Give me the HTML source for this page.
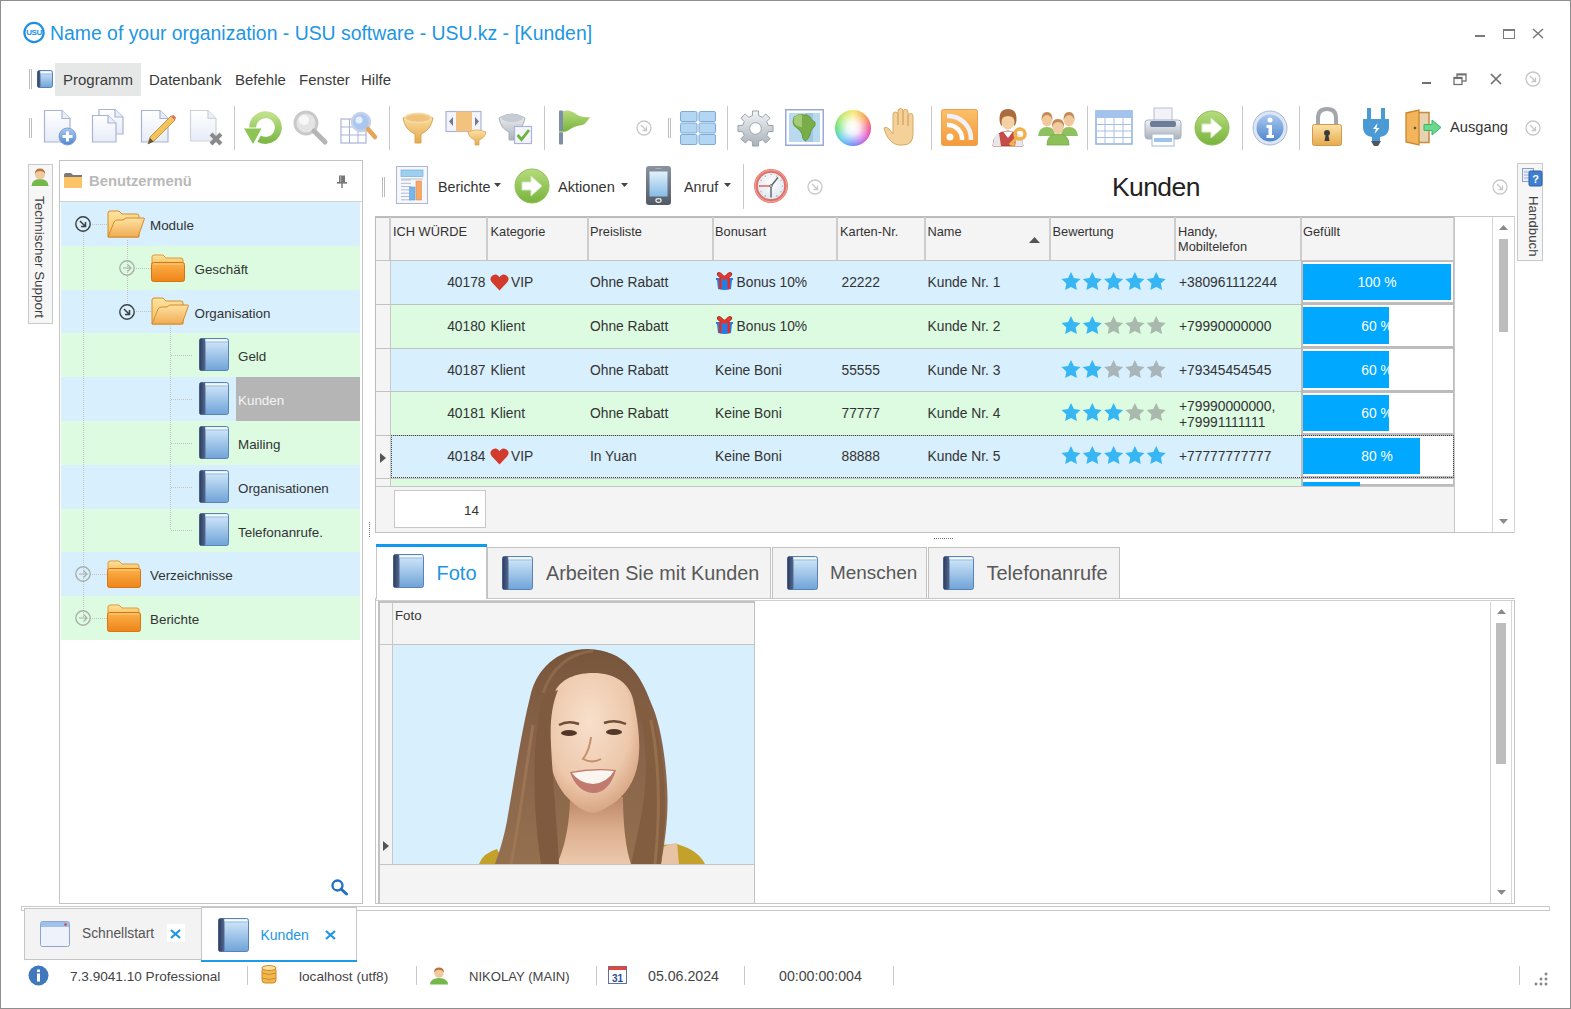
<!DOCTYPE html>
<html><head><meta charset="utf-8">
<style>
html,body{margin:0;padding:0;}
body{width:1571px;height:1009px;overflow:hidden;position:relative;background:#fff;font-family:"Liberation Sans",sans-serif;color:#333;}
.a{position:absolute;}
.t{position:absolute;white-space:nowrap;line-height:1;}
.ln{position:absolute;background:#c4c4c4;}
svg.i{position:absolute;overflow:visible;}
</style></head><body>
<svg width="0" height="0" style="position:absolute">
<defs>
<linearGradient id="gBook" x1="0" y1="0" x2="0" y2="1"><stop offset="0" stop-color="#d6ebfb"/><stop offset="1" stop-color="#6fa3d8"/></linearGradient>
<linearGradient id="gSpine" x1="0" y1="0" x2="1" y2="0"><stop offset="0" stop-color="#2d3c5e"/><stop offset="1" stop-color="#55688f"/></linearGradient>
<linearGradient id="gFold" x1="0" y1="0" x2="0" y2="1"><stop offset="0" stop-color="#fbb24a"/><stop offset="1" stop-color="#ee8419"/></linearGradient>
<linearGradient id="gFoldBack" x1="0" y1="0" x2="0" y2="1"><stop offset="0" stop-color="#fde3a0"/><stop offset="1" stop-color="#f6c25e"/></linearGradient>
<linearGradient id="gFoldOpen" x1="0" y1="0" x2="0" y2="1"><stop offset="0" stop-color="#fde2a4"/><stop offset="1" stop-color="#f1ac52"/></linearGradient>
<linearGradient id="gGreen" x1="0" y1="0" x2="0" y2="1"><stop offset="0" stop-color="#b6dc7c"/><stop offset="1" stop-color="#78b33c"/></linearGradient>
<linearGradient id="gDoc" x1="0" y1="0" x2="0" y2="1"><stop offset="0" stop-color="#ffffff"/><stop offset="1" stop-color="#e6ecf7"/></linearGradient>
<linearGradient id="gGold" x1="0" y1="0" x2="0" y2="1"><stop offset="0" stop-color="#fbe3a8"/><stop offset="1" stop-color="#e7a94c"/></linearGradient>
<linearGradient id="gSilver" x1="0" y1="0" x2="0" y2="1"><stop offset="0" stop-color="#f2f4f6"/><stop offset="1" stop-color="#a9b1ba"/></linearGradient>
<linearGradient id="gBlueBtn" x1="0" y1="0" x2="0" y2="1"><stop offset="0" stop-color="#a9c9ef"/><stop offset="1" stop-color="#4f86cf"/></linearGradient>
<radialGradient id="gWheel" cx="0.5" cy="0.5" r="0.5"><stop offset="0" stop-color="#ffffff"/><stop offset="1" stop-color="#ffffff" stop-opacity="0"/></radialGradient>
</defs></svg>
<div class="a" style="left:0;top:0;width:1571px;height:1009px;box-sizing:border-box;border:1px solid #8e8e8e;z-index:50;pointer-events:none"></div>
<svg class="i" style="left:23px;top:21px" width="22" height="23" viewBox="0 0 22 23"><circle cx="11" cy="11.5" r="9.6" fill="#fff" stroke="#1e8fe6" stroke-width="2.2"/><text x="11" y="14.3" font-family="Liberation Sans" font-weight="bold" font-size="8" fill="#1e8fe6" text-anchor="middle" letter-spacing="-0.4">USU</text></svg>
<div class="t" style="left:50px;top:24.18px;font-size:19.4px;color:#1d96e3;font-weight:normal;">Name of your organization - USU software - USU.kz - [Kunden]</div>
<div class="a" style="left:1475px;top:35px;width:10px;height:2px;background:#7c7c7c;"></div>
<div class="a" style="left:1503px;top:29px;width:12px;height:10px;box-sizing:border-box;border:1px solid #7c7c7c;background:transparent;border-top-width:2px"></div>
<svg class="i" style="left:1532px;top:28px" width="12" height="11" viewBox="0 0 12 11"><path d="M1 1 L11 10 M11 1 L1 10" stroke="#7c7c7c" stroke-width="1.6"/></svg>
<div class="a" style="left:29px;top:69px;width:1px;height:20px;background:#bdbdbd;"></div>
<div class="a" style="left:31px;top:69px;width:1px;height:20px;background:#bdbdbd;"></div>
<svg class="i" style="left:37px;top:70px" width="16" height="18" viewBox="0 0 16 18"><rect x="0.5" y="0.5" width="15" height="17" rx="2" fill="url(#gBook)" stroke="#5b82b4"/><rect x="0.5" y="0.5" width="3" height="17" rx="1.5" fill="url(#gSpine)"/><rect x="3.5" y="1.5" width="10.5" height="2" fill="#f4f9ff"/><line x1="4" y1="4" x2="14.5" y2="4" stroke="#8fb4dc" stroke-width="0.8"/></svg>
<div class="a" style="left:55px;top:63px;width:86px;height:33px;background:#e6e8e8;"></div>
<div class="t" style="left:63px;top:71.70px;font-size:15px;color:#3b3b3b;font-weight:normal;">Programm</div>
<div class="t" style="left:149px;top:71.70px;font-size:15px;color:#3b3b3b;font-weight:normal;">Datenbank</div>
<div class="t" style="left:235px;top:71.70px;font-size:15px;color:#3b3b3b;font-weight:normal;">Befehle</div>
<div class="t" style="left:299px;top:71.70px;font-size:15px;color:#3b3b3b;font-weight:normal;">Fenster</div>
<div class="t" style="left:361px;top:71.70px;font-size:15px;color:#3b3b3b;font-weight:normal;">Hilfe</div>
<div class="a" style="left:1422px;top:82px;width:9px;height:2px;background:#707070;"></div>
<svg class="i" style="left:1453px;top:73px" width="14" height="12" viewBox="0 0 14 12"><rect x="4" y="1" width="9" height="7" fill="none" stroke="#707070" stroke-width="1.3"/><rect x="1" y="4.5" width="8" height="7" fill="#fff" stroke="#707070" stroke-width="1.3"/><line x1="1" y1="5.3" x2="9" y2="5.3" stroke="#707070" stroke-width="1.5"/><line x1="4" y1="1.7" x2="13" y2="1.7" stroke="#707070" stroke-width="1.5"/></svg>
<svg class="i" style="left:1490px;top:73px" width="12" height="12" viewBox="0 0 12 12"><path d="M1 1 L11 11 M11 1 L1 11" stroke="#707070" stroke-width="1.7"/></svg>
<svg class="i" style="left:1525px;top:71px" width="16" height="16" viewBox="0 0 16 16"><circle cx="8" cy="8" r="7" fill="none" stroke="#c5c5c5" stroke-width="1.3"/><path d="M5 5 L10.5 10.5 M10.5 6.5 V10.5 H6.5" fill="none" stroke="#c5c5c5" stroke-width="1.3"/></svg>
<div class="a" style="left:29px;top:118px;width:1px;height:20px;background:#bdbdbd;"></div>
<div class="a" style="left:31px;top:118px;width:1px;height:20px;background:#bdbdbd;"></div>
<svg class="i" style="left:43px;top:109px" width="36" height="37" viewBox="0 0 36 37"><path d="M1.5 1.5 H19 L27 9.5 V33 H1.5 Z" fill="url(#gDoc)" stroke="#a9b3d8" stroke-width="1.2"/><path d="M19 1.5 V9.5 H27" fill="#e9eef8" stroke="#a9b3d8" stroke-width="1.2"/><circle cx="24.5" cy="27.5" r="8.5" fill="url(#gBlueBtn)" stroke="#7da2d6" stroke-width="1"/><path d="M24.5 22.5 V32.5 M19.5 27.5 H29.5" stroke="#fff" stroke-width="3"/></svg>
<svg class="i" style="left:91px;top:108px" width="36" height="38" viewBox="0 0 36 38"><path d="M8 1.5 H24 L32 9 V26 H8 Z" fill="url(#gDoc)" stroke="#a9b3d8" stroke-width="1.2"/><path d="M24 1.5 V9 H32" fill="#e9eef8" stroke="#a9b3d8" stroke-width="1.2"/><path d="M1.5 7.5 H17 L25 15 V34 H1.5 Z" fill="url(#gDoc)" stroke="#a9b3d8" stroke-width="1.2"/><path d="M17 7.5 V15 H25" fill="#e9eef8" stroke="#a9b3d8" stroke-width="1.2"/></svg>
<svg class="i" style="left:140px;top:109px" width="36" height="37" viewBox="0 0 36 37"><path d="M1.5 1.5 H20 L28 9.5 V33 H1.5 Z" fill="url(#gDoc)" stroke="#a9b3d8" stroke-width="1.2"/><path d="M20 1.5 V9.5 H28" fill="#e9eef8" stroke="#a9b3d8" stroke-width="1.2"/><path d="M8 35 L10 28 L31 7 L35 11 L14 32 Z" fill="#f2c35e" stroke="#c99534" stroke-width="1"/><path d="M31 7 L35 11 L36 8.5 L33.5 6 Z" fill="#e86a6a"/><path d="M8 35 L10 29 L13.5 32.5 Z" fill="#555"/></svg>
<svg class="i" style="left:189px;top:108px" width="36" height="38" viewBox="0 0 36 38"><path d="M1.5 2.5 H19 L27 10.5 V33 H1.5 Z" fill="url(#gDoc)" stroke="#cfd3d8" stroke-width="1.2"/><path d="M19 2.5 V10.5 H27" fill="#e9eef8" stroke="#cfd3d8" stroke-width="1.2"/><path d="M22 26 L32 36 M32 26 L22 36" stroke="#8a8a8a" stroke-width="4"/></svg>
<div class="a" style="left:234px;top:106px;width:1px;height:44px;background:#c9c9c9;"></div>
<svg class="i" style="left:243px;top:110px" width="40" height="35" viewBox="0 0 40 35"><defs><linearGradient id="rfG" x1="0" y1="0" x2="0" y2="1"><stop offset="0" stop-color="#bfe08a"/><stop offset="1" stop-color="#7fba48"/></linearGradient></defs><path d="M9.7 17.5 A12.8 12.8 0 1 1 16.1 28.6" fill="none" stroke="url(#rfG)" stroke-width="7"/><path d="M1 18.5 H18.5 L10 34 Z" fill="#8cc456"/></svg>
<svg class="i" style="left:293px;top:110px" width="36" height="35" viewBox="0 0 36 35"><circle cx="13" cy="13" r="11" fill="#e4e4e4" stroke="#c9c9c9" stroke-width="3"/><circle cx="11" cy="10" r="5" fill="#f7f7f7"/><path d="M21 21 L32 32" stroke="#b5b5b5" stroke-width="5" stroke-linecap="round"/></svg>
<svg class="i" style="left:340px;top:110px" width="40" height="35" viewBox="0 0 40 35"><rect x="1" y="9" width="25" height="24" fill="#fff" stroke="#a9b3d8" stroke-width="1.2"/><path d="M1 17 H26 M1 25 H26 M9.5 9 V33 M18 9 V33" stroke="#a9b3d8" stroke-width="1"/><circle cx="21" cy="12" r="9" fill="#aac7ef" stroke="#c7d1ea" stroke-width="2.5"/><circle cx="19" cy="10" r="3.5" fill="#e6f0fc"/><path d="M28 19 L35 27" stroke="#e8a55a" stroke-width="4.5" stroke-linecap="round"/></svg>
<div class="a" style="left:389px;top:106px;width:1px;height:44px;background:#c9c9c9;"></div>
<svg class="i" style="left:401px;top:110px" width="34" height="35" viewBox="0 0 34 35"><path d="M2 8 Q17 0 32 8 Q30 20 20 24 V33 H14 V24 Q4 20 2 8 Z" fill="url(#gGold)" stroke="#d9a458" stroke-width="1"/><ellipse cx="17" cy="8" rx="13" ry="4.5" fill="#f0c27c" stroke="#f7dba8" stroke-width="1.5"/></svg>
<svg class="i" style="left:445px;top:110px" width="44" height="37" viewBox="0 0 44 37"><rect x="1" y="1.5" width="35" height="20" fill="#f2f4fa" stroke="#a9b3d8" stroke-width="1.2"/><rect x="11" y="1.5" width="16" height="20" fill="#f3c27e"/><path d="M8 7 L4 11.5 L8 16 Z M30 7 L34 11.5 L30 16 Z" fill="#6f7b93"/><path d="M23 22 Q32 18 41 22 Q40 28 34 30 V35 H30 V30 Q24 28 23 22 Z" fill="url(#gGold)" stroke="#d9a458" stroke-width="0.8"/></svg>
<svg class="i" style="left:498px;top:110px" width="36" height="36" viewBox="0 0 36 36"><path d="M1 8 Q14 0 27 8 Q25 19 17 22 V30 H11 V22 Q3 19 1 8 Z" fill="url(#gSilver)" stroke="#aab2ba" stroke-width="1"/><ellipse cx="14" cy="8" rx="11" ry="4" fill="#c5ccd3"/><rect x="16.5" y="16.5" width="17" height="17" fill="#f3f5fb" stroke="#a9b3d8" stroke-width="1.2"/><path d="M19.5 25 L23.5 29.5 L31 20" fill="none" stroke="#6cb33e" stroke-width="2.8"/></svg>
<div class="a" style="left:544px;top:106px;width:1px;height:44px;background:#c9c9c9;"></div>
<svg class="i" style="left:556px;top:110px" width="36" height="36" viewBox="0 0 36 36"><rect x="3" y="0.5" width="4" height="34" rx="1" fill="#7d8ea8"/><path d="M7 1 Q14 -1 20 4 Q26 8 34 7 Q30 14 26 15 Q18 16 13 20 Q10 22 7 22 Z" fill="url(#gGreen)"/><rect x="3" y="21" width="4" height="1.5" fill="#a6d36a"/></svg>
<svg class="i" style="left:636px;top:120px" width="16" height="16" viewBox="0 0 16 16"><circle cx="8" cy="8" r="7" fill="none" stroke="#c8c8c8" stroke-width="1.3"/><path d="M5 5 L10.5 10.5 M10.5 6.5 V10.5 H6.5" fill="none" stroke="#c8c8c8" stroke-width="1.3"/></svg>
<div class="a" style="left:668px;top:118px;width:1px;height:20px;background:#bdbdbd;"></div>
<div class="a" style="left:670px;top:118px;width:1px;height:20px;background:#bdbdbd;"></div>
<svg class="i" style="left:679px;top:110px" width="38" height="36" viewBox="0 0 38 36"><rect x="1.5" y="1.5" width="16.5" height="10" rx="1.5" fill="#b3d6f3" stroke="#7fa9d9" stroke-width="1"/><rect x="20.0" y="1.5" width="16.5" height="10" rx="1.5" fill="#b3d6f3" stroke="#7fa9d9" stroke-width="1"/><rect x="1.5" y="13.0" width="16.5" height="10" rx="1.5" fill="#b3d6f3" stroke="#7fa9d9" stroke-width="1"/><rect x="20.0" y="13.0" width="16.5" height="10" rx="1.5" fill="#b3d6f3" stroke="#7fa9d9" stroke-width="1"/><rect x="1.5" y="24.5" width="16.5" height="10" rx="1.5" fill="#b3d6f3" stroke="#7fa9d9" stroke-width="1"/><rect x="20.0" y="24.5" width="16.5" height="10" rx="1.5" fill="#b3d6f3" stroke="#7fa9d9" stroke-width="1"/></svg>
<div class="a" style="left:727px;top:106px;width:1px;height:44px;background:#c9c9c9;"></div>
<svg class="i" style="left:737px;top:110px" width="37" height="37" viewBox="0 0 37 37"><polygon points="31.32,15.36 36.04,15.49 36.04,21.51 31.32,21.64 29.78,25.35 33.03,28.78 28.78,33.03 25.35,29.78 21.64,31.32 21.51,36.04 15.49,36.04 15.36,31.32 11.65,29.78 8.22,33.03 3.97,28.78 7.22,25.35 5.68,21.64 0.96,21.51 0.96,15.49 5.68,15.36 7.22,11.65 3.97,8.22 8.22,3.97 11.65,7.22 15.36,5.68 15.49,0.96 21.51,0.96 21.64,5.68 25.35,7.22 28.78,3.97 33.03,8.22 29.78,11.65" fill="url(#gSilver)" stroke="#9aa2ab" stroke-width="1" stroke-linejoin="round"/><circle cx="18.5" cy="18.5" r="5.8" fill="#fff" stroke="#a0a8b0" stroke-width="1"/></svg>
<svg class="i" style="left:785px;top:109px" width="39" height="37" viewBox="0 0 39 37"><rect x="0.75" y="0.75" width="37.5" height="35.5" fill="#fff" stroke="#9aa8d8" stroke-width="1.5"/><rect x="4" y="4" width="31" height="29" fill="#b9d9ef"/><rect x="20" y="4" width="8" height="29" fill="#9fc6e4"/><path d="M9 8 Q14 4 19 6 Q22 5 25 8 Q26 11 30 13 Q31 17 28 19 Q25 22 25 26 Q23 31 20 32 Q17 30 17 25 Q15 21 12 19 Q8 17 8 13 Z" fill="#79ad48" stroke="#5f9238" stroke-width="0.8"/><path d="M9 8 Q14 4 17 6 L17 18 Q12 18 9 14 Z" fill="#b8d78a" opacity="0.7"/></svg>
<div class="a" style="left:835px;top:110px;width:36px;height:36px;border-radius:50%;background:conic-gradient(from 0deg,#f7e86a,#f8a14a,#f0508a,#d25be0,#6b8cf4,#57c8f0,#5fe07a,#b8e86a,#f7e86a)"></div>
<div class="a" style="left:835px;top:110px;width:36px;height:36px;border-radius:50%;background:radial-gradient(circle,#fff 0,rgba(255,255,255,0.85) 25%,rgba(255,255,255,0) 70%)"></div>
<svg class="i" style="left:883px;top:108px" width="38" height="39" viewBox="0 0 38 39"><path d="M15 37 Q7 35 3 26 L1 20 Q3 18 6 21 L10 26 V7 Q10 4 12.5 4 Q15 4 15 7 V17 V3 Q15 0.5 17.5 0.5 Q20 0.5 20 3 V17 V4 Q20 1.5 22.5 1.5 Q25 1.5 25 4 V18 V8 Q25 5.5 27.5 5.5 Q30 5.5 30 8 V26 Q30 37 20 37 Z" fill="#f4d199" stroke="#d8a865" stroke-width="1"/></svg>
<div class="a" style="left:931px;top:106px;width:1px;height:44px;background:#c9c9c9;"></div>
<svg class="i" style="left:941px;top:109px" width="37" height="37" viewBox="0 0 37 37"><defs><linearGradient id="rssG" x1="0" y1="0" x2="0" y2="1"><stop offset="0" stop-color="#fbbf6a"/><stop offset="1" stop-color="#f39a3c"/></linearGradient></defs><rect x="0.5" y="0.5" width="36" height="36" rx="2" fill="url(#rssG)" stroke="#f0a050"/><circle cx="9" cy="28" r="3.5" fill="#fff"/><path d="M6 16 A14 14 0 0 1 21 31" fill="none" stroke="#fff" stroke-width="4.5"/><path d="M6 7 A23 23 0 0 1 30 31" fill="none" stroke="#f1f1f8" stroke-width="4.5"/></svg>
<svg class="i" style="left:991px;top:107px" width="38" height="40" viewBox="0 0 38 40"><path d="M2 39 Q2 25 17 24 Q31 25 32 39 Z" fill="#c64a48" stroke="#9a3a38" stroke-width="0.8"/><path d="M2 39 Q2 28 8 26 L10 39 Z M32 39 Q32 28 26 26 L24 39 Z" fill="#e8e8ea"/><path d="M12 24.5 L17 31 L22 24.5 Z" fill="#fff"/><path d="M8.5 13 Q8 2 17 2 Q26 2 25.5 13 Q25 18 23 19 Q24 10 17 9.5 Q10 10 11 19 Q9 18 8.5 13 Z" fill="#a86c3e"/><ellipse cx="17" cy="15" rx="6.5" ry="7.5" fill="#f4d0a4"/><path d="M10 12 Q11 6 17 6 Q23 6 24 12 Q21 9 17 9 Q13 9 10 12 Z" fill="#a86c3e"/><circle cx="29" cy="27" r="5" fill="none" stroke="#f0b24a" stroke-width="3.5"/><path d="M26 30.5 L19 38 M21 36 L23.5 38.5" stroke="#f0b24a" stroke-width="3.2"/></svg>
<svg class="i" style="left:1038px;top:110px" width="40" height="36" viewBox="0 0 40 36"><path d="M0 26 Q1 17 9 17 Q17 17 17 26 Z M23 26 Q23 17 31 17 Q39 17 40 26 Z" fill="#8fc25e"/><ellipse cx="9" cy="10.5" rx="5" ry="6" fill="#f0c89a"/><ellipse cx="31" cy="10.5" rx="5" ry="6" fill="#f0c89a"/><path d="M3.5 11 Q3 2 9 2 Q15 2 14.5 11 Q13 5 9 5 Q5 5 3.5 11 Z M25.5 11 Q25 2 31 2 Q37 2 36.5 11 Q35 5 31 5 Q27 5 25.5 11 Z" fill="#c48a56"/><path d="M9 35 Q9 24 20 24 Q31 24 31 35 Z" fill="#8cc058" stroke="#76a84a" stroke-width="0.8"/><ellipse cx="20" cy="17.5" rx="5.5" ry="6.5" fill="#f2cba0"/><path d="M14 18 Q13 9 20 9 Q27 9 26 18 Q25 12 20 12 Q15 12 14 18 Z" fill="#c48a56"/></svg>
<div class="a" style="left:1087px;top:106px;width:1px;height:44px;background:#c9c9c9;"></div>
<svg class="i" style="left:1095px;top:110px" width="38" height="36" viewBox="0 0 38 36"><rect x="1" y="1" width="36" height="33" fill="#fff" stroke="#8fb0dc" stroke-width="1.5"/><rect x="1" y="1" width="36" height="7" fill="#a2c4ec"/><line x1="10" y1="1" x2="10" y2="34" stroke="#a9c0e2" stroke-width="1"/><line x1="19" y1="1" x2="19" y2="34" stroke="#a9c0e2" stroke-width="1"/><line x1="28" y1="1" x2="28" y2="34" stroke="#a9c0e2" stroke-width="1"/><line x1="1" y1="14.5" x2="37" y2="14.5" stroke="#a9c0e2" stroke-width="1"/><line x1="1" y1="21.0" x2="37" y2="21.0" stroke="#a9c0e2" stroke-width="1"/><line x1="1" y1="27.5" x2="37" y2="27.5" stroke="#a9c0e2" stroke-width="1"/></svg>
<svg class="i" style="left:1144px;top:107px" width="38" height="40" viewBox="0 0 38 40"><rect x="10" y="1" width="18" height="13" fill="#f1f3f8" stroke="#b7bfd3" stroke-width="1"/><rect x="1" y="13" width="36" height="19" rx="3" fill="url(#gSilver)" stroke="#a7b0c4" stroke-width="1"/><rect x="6" y="14" width="26" height="6" rx="2" fill="#6c7d9a"/><rect x="8" y="27" width="22" height="12" fill="#fff" stroke="#a7b7d3" stroke-width="1"/><rect x="10" y="31" width="18" height="4" fill="#9cc4ec"/></svg>
<svg class="i" style="left:1194px;top:110px" width="37" height="36" viewBox="0 0 37 36"><circle cx="18" cy="18" r="17" fill="url(#gGreen)" stroke="#8cbf55" stroke-width="1"/><path d="M8 14 H17 V8 L28 18 L17 28 V22 H8 Z" fill="#fff" stroke="#d8ecd0" stroke-width="1"/></svg>
<div class="a" style="left:1242px;top:106px;width:1px;height:44px;background:#c9c9c9;"></div>
<svg class="i" style="left:1252px;top:110px" width="36" height="36" viewBox="0 0 36 36"><circle cx="18" cy="18" r="17" fill="#dfe6f3" stroke="#a9b8d3" stroke-width="1"/><circle cx="18" cy="18" r="13.5" fill="url(#gBlueBtn)"/><circle cx="18" cy="10" r="2.5" fill="#fff"/><path d="M14.5 15 H20 V25 H22 V28 H14.5 V25 H16.5 V18 H14.5 Z" fill="#fff"/></svg>
<div class="a" style="left:1299px;top:106px;width:1px;height:44px;background:#c9c9c9;"></div>
<svg class="i" style="left:1311px;top:107px" width="32" height="40" viewBox="0 0 32 40"><path d="M7 19 V11 Q7 2 16 2 Q25 2 25 11 V19" fill="none" stroke="#a3a6ab" stroke-width="4"/><rect x="1.5" y="17.5" width="29" height="21" rx="2" fill="url(#gGold)" stroke="#d29a4c" stroke-width="1"/><path d="M16 23 Q19 23 19 26 Q19 28 17.5 28.5 L18.5 34 H13.5 L14.5 28.5 Q13 28 13 26 Q13 23 16 23 Z" fill="#3b3b3b"/></svg>
<svg class="i" style="left:1360px;top:107px" width="32" height="40" viewBox="0 0 32 40"><rect x="7" y="1" width="4" height="12" fill="#4a9ad6"/><rect x="21" y="1" width="4" height="12" fill="#4a9ad6"/><path d="M3 12 H29 V20 Q29 29 20 30 V34 H12 V30 Q3 29 3 20 Z" fill="#4a9ad6"/><path d="M17.5 16 L13 22 H16 L14.5 27 L19.5 21 H16.5 Z" fill="#fff"/><path d="M11 34 H21 L18 39 H14 Z" fill="#4d5560"/></svg>
<svg class="i" style="left:1404px;top:109px" width="40" height="37" viewBox="0 0 40 37"><rect x="12" y="3.5" width="13" height="30" fill="#e7d2b1" stroke="#c98a3a" stroke-width="1.5"/><path d="M2 4 L15 1 V36 L2 33 Z" fill="#f4b45a" stroke="#c9882f" stroke-width="1.3"/><circle cx="11" cy="19" r="1.3" fill="#555"/><path d="M20 15.5 H28 V11 L37 18.5 L28 26 V21.5 H20 Z" fill="#6ad98d" stroke="#3fb26a" stroke-width="1"/></svg>
<div class="t" style="left:1450px;top:120.36px;font-size:14.7px;color:#333;font-weight:normal;">Ausgang</div>
<svg class="i" style="left:1525px;top:120px" width="16" height="16" viewBox="0 0 16 16"><circle cx="8" cy="8" r="7" fill="none" stroke="#c8c8c8" stroke-width="1.3"/><path d="M5 5 L10.5 10.5 M10.5 6.5 V10.5 H6.5" fill="none" stroke="#c8c8c8" stroke-width="1.3"/></svg>
<div class="a" style="left:28px;top:164px;width:25px;height:160px;box-sizing:border-box;border:1px solid #c9c9c9;background:#f6f6f6;"></div>
<svg class="i" style="left:30px;top:167px" width="20" height="20" viewBox="0 0 20 20"><path d="M1.5 19 Q2 12 10 12 Q18 12 18.5 19 Z" fill="#74b84a"/><circle cx="10" cy="7.5" r="5" fill="#f1c9a0"/><path d="M4.8 7 Q5 1.5 10 1.5 Q15 1.5 15.2 7 Q13.5 4 10 4 Q6.5 4 4.8 7 Z" fill="#b8763c"/></svg>
<div class="t" style="left:45.5px;top:196px;font-size:13.4px;color:#3f3f3f;transform-origin:0 0;transform:rotate(90deg)">Technischer Support</div>
<div class="a" style="left:59px;top:160px;width:304px;height:744px;box-sizing:border-box;border:1px solid #c4c4c4;background:#fff;"></div>
<div class="a" style="left:60px;top:201px;width:302px;height:1px;background:#d0d0d0;"></div>
<svg class="i" style="left:64px;top:173px" width="18" height="15" viewBox="0 0 18 15"><path d="M0 2 Q0 0 2 0 H7 L9 2 H18 V6 H0 Z" fill="#7a7a7a"/><rect x="0" y="4" width="18" height="11" fill="#fbc466"/></svg>
<div class="t" style="left:89px;top:174.07px;font-size:14.8px;color:#b9b9b9;font-weight:bold;">Benutzermenü</div>
<svg class="i" style="left:336px;top:175px" width="12" height="13" viewBox="0 0 12 13"><rect x="3" y="0.5" width="6" height="7" fill="#777"/><rect x="1" y="7" width="10" height="1.6" fill="#777"/><rect x="5.3" y="8" width="1.4" height="5" fill="#777"/><rect x="4" y="1" width="1.2" height="6" fill="#aaa"/></svg>
<div class="a" style="left:61px;top:202px;width:299px;height:44px;background:#d8effd;"></div>
<div class="a" style="left:61px;top:246px;width:299px;height:44px;background:#dcfbe1;"></div>
<div class="a" style="left:61px;top:290px;width:299px;height:43px;background:#d8effd;"></div>
<div class="a" style="left:61px;top:333px;width:299px;height:44px;background:#dcfbe1;"></div>
<div class="a" style="left:61px;top:377px;width:299px;height:44px;background:#d8effd;"></div>
<div class="a" style="left:61px;top:421px;width:299px;height:44px;background:#dcfbe1;"></div>
<div class="a" style="left:61px;top:465px;width:299px;height:44px;background:#d8effd;"></div>
<div class="a" style="left:61px;top:509px;width:299px;height:43px;background:#dcfbe1;"></div>
<div class="a" style="left:61px;top:552px;width:299px;height:44px;background:#d8effd;"></div>
<div class="a" style="left:61px;top:596px;width:299px;height:44px;background:#dcfbe1;"></div>
<div class="a" style="left:236px;top:377px;width:124px;height:44px;background:#b5b5b5;"></div>
<div class="a" style="left:83px;top:232px;width:1px;height:386px;background:repeating-linear-gradient(to bottom,#c4c4c4 0 1px,transparent 1px 2px)"></div>
<div class="a" style="left:92px;top:224px;width:15px;height:1px;background:repeating-linear-gradient(to right,#c4c4c4 0 1px,transparent 1px 2px)"></div>
<div class="a" style="left:92px;top:574px;width:15px;height:1px;background:repeating-linear-gradient(to right,#c4c4c4 0 1px,transparent 1px 2px)"></div>
<div class="a" style="left:92px;top:618px;width:15px;height:1px;background:repeating-linear-gradient(to right,#c4c4c4 0 1px,transparent 1px 2px)"></div>
<div class="a" style="left:127px;top:240px;width:1px;height:65px;background:repeating-linear-gradient(to bottom,#c4c4c4 0 1px,transparent 1px 2px)"></div>
<div class="a" style="left:136px;top:268px;width:15px;height:1px;background:repeating-linear-gradient(to right,#c4c4c4 0 1px,transparent 1px 2px)"></div>
<div class="a" style="left:136px;top:311px;width:15px;height:1px;background:repeating-linear-gradient(to right,#c4c4c4 0 1px,transparent 1px 2px)"></div>
<div class="a" style="left:170px;top:326px;width:1px;height:204px;background:repeating-linear-gradient(to bottom,#c4c4c4 0 1px,transparent 1px 2px)"></div>
<div class="a" style="left:171px;top:355px;width:22px;height:1px;background:repeating-linear-gradient(to right,#c4c4c4 0 1px,transparent 1px 2px)"></div>
<div class="a" style="left:171px;top:399px;width:22px;height:1px;background:repeating-linear-gradient(to right,#c4c4c4 0 1px,transparent 1px 2px)"></div>
<div class="a" style="left:171px;top:443px;width:22px;height:1px;background:repeating-linear-gradient(to right,#c4c4c4 0 1px,transparent 1px 2px)"></div>
<div class="a" style="left:171px;top:487px;width:22px;height:1px;background:repeating-linear-gradient(to right,#c4c4c4 0 1px,transparent 1px 2px)"></div>
<div class="a" style="left:171px;top:530px;width:22px;height:1px;background:repeating-linear-gradient(to right,#c4c4c4 0 1px,transparent 1px 2px)"></div>
<svg class="i" style="left:75px;top:216.0px" width="16" height="16" viewBox="0 0 16 16"><circle cx="8" cy="8" r="7.2" fill="none" stroke="#3a3f44" stroke-width="1.4"/><path d="M5 5 L10.5 10.5 M10.5 6 V10.5 H6" fill="none" stroke="#3a3f44" stroke-width="1.5"/></svg>
<svg class="i" style="left:107px;top:210px" width="38" height="28" viewBox="0 0 38 28"><path d="M1 3 Q1 1 3 1 H12 L15 4 H30 Q32 4 32 6 V27 H1 Z" fill="url(#gFoldBack)" stroke="#d98a2a" stroke-width="1"/><path d="M1 27 L7 12 Q8 10 10 10 H16 L19 8 H37 Q38 8 37 10 L31 27 Z" fill="url(#gFoldOpen)" stroke="#d98a2a" stroke-width="1"/></svg>
<div class="t" style="left:150px;top:219.16px;font-size:13.4px;color:#333;font-weight:normal;">Module</div>
<svg class="i" style="left:119px;top:260.0px" width="16" height="16" viewBox="0 0 16 16"><circle cx="8" cy="8" r="7.2" fill="none" stroke="#a9b0aa" stroke-width="1.4"/><path d="M4 8 H12 M8.5 4.5 L12 8 L8.5 11.5" fill="none" stroke="#a9b0aa" stroke-width="1.2"/></svg>
<svg class="i" style="left:151px;top:254px" width="34" height="28" viewBox="0 0 34 28"><path d="M1 3 Q1 1 3 1 H12 L15 4 H30 Q32 4 32 6 V10 H1 Z" fill="url(#gFoldBack)" stroke="#de9a3a" stroke-width="1"/><rect x="0.5" y="8.5" width="33" height="19" rx="2" fill="url(#gFold)" stroke="#d77514"/><line x1="2" y1="10" x2="32" y2="10" stroke="#fcd08a" stroke-width="1"/></svg>
<div class="t" style="left:194.5px;top:263.16px;font-size:13.4px;color:#333;font-weight:normal;">Geschäft</div>
<svg class="i" style="left:119px;top:303.5px" width="16" height="16" viewBox="0 0 16 16"><circle cx="8" cy="8" r="7.2" fill="none" stroke="#3a3f44" stroke-width="1.4"/><path d="M5 5 L10.5 10.5 M10.5 6 V10.5 H6" fill="none" stroke="#3a3f44" stroke-width="1.5"/></svg>
<svg class="i" style="left:151px;top:297px" width="38" height="28" viewBox="0 0 38 28"><path d="M1 3 Q1 1 3 1 H12 L15 4 H30 Q32 4 32 6 V27 H1 Z" fill="url(#gFoldBack)" stroke="#d98a2a" stroke-width="1"/><path d="M1 27 L7 12 Q8 10 10 10 H16 L19 8 H37 Q38 8 37 10 L31 27 Z" fill="url(#gFoldOpen)" stroke="#d98a2a" stroke-width="1"/></svg>
<div class="t" style="left:194.5px;top:306.66px;font-size:13.4px;color:#333;font-weight:normal;">Organisation</div>
<svg class="i" style="left:199px;top:338px" width="30" height="33" viewBox="0 0 30 33"><rect x="0.5" y="0.5" width="29" height="32" rx="2" fill="url(#gBook)" stroke="#5b82b4"/><rect x="0.5" y="0.5" width="6" height="32" rx="1.5" fill="url(#gSpine)"/><rect x="6.5" y="1.5" width="21.5" height="2" fill="#f4f9ff"/><line x1="7" y1="4" x2="28.5" y2="4" stroke="#8fb4dc" stroke-width="0.8"/></svg>
<div class="t" style="left:238px;top:350.16px;font-size:13.4px;color:#333;font-weight:normal;">Geld</div>
<svg class="i" style="left:199px;top:382px" width="30" height="33" viewBox="0 0 30 33"><rect x="0.5" y="0.5" width="29" height="32" rx="2" fill="url(#gBook)" stroke="#5b82b4"/><rect x="0.5" y="0.5" width="6" height="32" rx="1.5" fill="url(#gSpine)"/><rect x="6.5" y="1.5" width="21.5" height="2" fill="#f4f9ff"/><line x1="7" y1="4" x2="28.5" y2="4" stroke="#8fb4dc" stroke-width="0.8"/></svg>
<div class="t" style="left:238px;top:394.16px;font-size:13.4px;color:#f4f4f4;font-weight:normal;">Kunden</div>
<svg class="i" style="left:199px;top:426px" width="30" height="33" viewBox="0 0 30 33"><rect x="0.5" y="0.5" width="29" height="32" rx="2" fill="url(#gBook)" stroke="#5b82b4"/><rect x="0.5" y="0.5" width="6" height="32" rx="1.5" fill="url(#gSpine)"/><rect x="6.5" y="1.5" width="21.5" height="2" fill="#f4f9ff"/><line x1="7" y1="4" x2="28.5" y2="4" stroke="#8fb4dc" stroke-width="0.8"/></svg>
<div class="t" style="left:238px;top:438.16px;font-size:13.4px;color:#333;font-weight:normal;">Mailing</div>
<svg class="i" style="left:199px;top:470px" width="30" height="33" viewBox="0 0 30 33"><rect x="0.5" y="0.5" width="29" height="32" rx="2" fill="url(#gBook)" stroke="#5b82b4"/><rect x="0.5" y="0.5" width="6" height="32" rx="1.5" fill="url(#gSpine)"/><rect x="6.5" y="1.5" width="21.5" height="2" fill="#f4f9ff"/><line x1="7" y1="4" x2="28.5" y2="4" stroke="#8fb4dc" stroke-width="0.8"/></svg>
<div class="t" style="left:238px;top:482.16px;font-size:13.4px;color:#333;font-weight:normal;">Organisationen</div>
<svg class="i" style="left:199px;top:513px" width="30" height="33" viewBox="0 0 30 33"><rect x="0.5" y="0.5" width="29" height="32" rx="2" fill="url(#gBook)" stroke="#5b82b4"/><rect x="0.5" y="0.5" width="6" height="32" rx="1.5" fill="url(#gSpine)"/><rect x="6.5" y="1.5" width="21.5" height="2" fill="#f4f9ff"/><line x1="7" y1="4" x2="28.5" y2="4" stroke="#8fb4dc" stroke-width="0.8"/></svg>
<div class="t" style="left:238px;top:525.66px;font-size:13.4px;color:#333;font-weight:normal;">Telefonanrufe.</div>
<svg class="i" style="left:75px;top:566.0px" width="16" height="16" viewBox="0 0 16 16"><circle cx="8" cy="8" r="7.2" fill="none" stroke="#a9b0aa" stroke-width="1.4"/><path d="M4 8 H12 M8.5 4.5 L12 8 L8.5 11.5" fill="none" stroke="#a9b0aa" stroke-width="1.2"/></svg>
<svg class="i" style="left:107px;top:560px" width="34" height="28" viewBox="0 0 34 28"><path d="M1 3 Q1 1 3 1 H12 L15 4 H30 Q32 4 32 6 V10 H1 Z" fill="url(#gFoldBack)" stroke="#de9a3a" stroke-width="1"/><rect x="0.5" y="8.5" width="33" height="19" rx="2" fill="url(#gFold)" stroke="#d77514"/><line x1="2" y1="10" x2="32" y2="10" stroke="#fcd08a" stroke-width="1"/></svg>
<div class="t" style="left:150px;top:569.16px;font-size:13.4px;color:#333;font-weight:normal;">Verzeichnisse</div>
<svg class="i" style="left:75px;top:610.0px" width="16" height="16" viewBox="0 0 16 16"><circle cx="8" cy="8" r="7.2" fill="none" stroke="#a9b0aa" stroke-width="1.4"/><path d="M4 8 H12 M8.5 4.5 L12 8 L8.5 11.5" fill="none" stroke="#a9b0aa" stroke-width="1.2"/></svg>
<svg class="i" style="left:107px;top:604px" width="34" height="28" viewBox="0 0 34 28"><path d="M1 3 Q1 1 3 1 H12 L15 4 H30 Q32 4 32 6 V10 H1 Z" fill="url(#gFoldBack)" stroke="#de9a3a" stroke-width="1"/><rect x="0.5" y="8.5" width="33" height="19" rx="2" fill="url(#gFold)" stroke="#d77514"/><line x1="2" y1="10" x2="32" y2="10" stroke="#fcd08a" stroke-width="1"/></svg>
<div class="t" style="left:150px;top:613.16px;font-size:13.4px;color:#333;font-weight:normal;">Berichte</div>
<svg class="i" style="left:331px;top:879px" width="17" height="16" viewBox="0 0 17 16"><circle cx="6.5" cy="6.5" r="5" fill="none" stroke="#1f6fc4" stroke-width="2.3"/><path d="M10 10 L15.5 15" stroke="#1f6fc4" stroke-width="3" stroke-linecap="round"/></svg>
<div class="a" style="left:382px;top:177px;width:1px;height:20px;background:#bdbdbd;"></div>
<div class="a" style="left:384px;top:177px;width:1px;height:20px;background:#bdbdbd;"></div>
<svg class="i" style="left:396px;top:166px" width="32" height="38" viewBox="0 0 32 38"><rect x="0.5" y="0.5" width="31" height="37" fill="#f6f8fc" stroke="#aab6d8" stroke-width="1"/><rect x="5" y="4" width="22" height="6.5" fill="#9cd0ee" stroke="#7fb5de" stroke-width="0.8"/><line x1="5" y1="14.0" x2="15" y2="14.0" stroke="#b3bcd6" stroke-width="1"/><line x1="5" y1="17.3" x2="15" y2="17.3" stroke="#b3bcd6" stroke-width="1"/><line x1="5" y1="20.6" x2="15" y2="20.6" stroke="#b3bcd6" stroke-width="1"/><line x1="5" y1="23.9" x2="15" y2="23.9" stroke="#b3bcd6" stroke-width="1"/><line x1="5" y1="27.2" x2="15" y2="27.2" stroke="#b3bcd6" stroke-width="1"/><line x1="5" y1="30.5" x2="15" y2="30.5" stroke="#b3bcd6" stroke-width="1"/><line x1="5" y1="33.8" x2="15" y2="33.8" stroke="#b3bcd6" stroke-width="1"/><line x1="5" y1="13" x2="27" y2="13" stroke="#b3bcd6" stroke-width="1"/><rect x="13.5" y="21" width="5.5" height="13" fill="#78b6e8" stroke="#5f9fd6" stroke-width="0.6"/><rect x="20" y="15" width="5.5" height="19" fill="#f5aa6c" stroke="#e58e4a" stroke-width="0.6"/></svg>
<div class="t" style="left:438px;top:179.90px;font-size:14.3px;color:#333;font-weight:normal;">Berichte</div>
<svg class="i" style="left:494px;top:183px" width="7" height="4" viewBox="0 0 7 4"><path d="M0 0 H7 L3.5 4 Z" fill="#444"/></svg>
<svg class="i" style="left:514px;top:168px" width="37" height="36" viewBox="0 0 37 36"><circle cx="18" cy="18" r="17" fill="url(#gGreen)" stroke="#8dbf58" stroke-width="1"/><path d="M8 14 H17 V8 L28 18 L17 28 V22 H8 Z" fill="#fff" stroke="#d0e8c0" stroke-width="1"/></svg>
<div class="t" style="left:558px;top:179.64px;font-size:14.6px;color:#333;font-weight:normal;">Aktionen</div>
<svg class="i" style="left:621px;top:183px" width="7" height="4" viewBox="0 0 7 4"><path d="M0 0 H7 L3.5 4 Z" fill="#444"/></svg>
<svg class="i" style="left:645px;top:165px" width="27" height="41" viewBox="0 0 27 41"><defs><linearGradient id="phB" x1="0" y1="0" x2="0" y2="1"><stop offset="0" stop-color="#8a93a0"/><stop offset="1" stop-color="#525a66"/></linearGradient><linearGradient id="phS" x1="0" y1="0" x2="0" y2="1"><stop offset="0" stop-color="#e2f1fb"/><stop offset="1" stop-color="#86bbe6"/></linearGradient></defs><rect x="1" y="1" width="25" height="39" rx="3" fill="url(#phB)"/><rect x="4.5" y="6.5" width="18" height="25" fill="url(#phS)"/><rect x="10.5" y="3" width="6" height="1" fill="#aab"/><ellipse cx="13.5" cy="35.5" rx="2.6" ry="1.8" fill="none" stroke="#eee" stroke-width="1.2"/></svg>
<div class="t" style="left:684px;top:179.90px;font-size:14.3px;color:#333;font-weight:normal;">Anruf</div>
<svg class="i" style="left:724px;top:183px" width="7" height="4" viewBox="0 0 7 4"><path d="M0 0 H7 L3.5 4 Z" fill="#444"/></svg>
<div class="a" style="left:743px;top:164px;width:1px;height:45px;background:#c9c9c9;"></div>
<svg class="i" style="left:752px;top:167px" width="38" height="38" viewBox="0 0 38 38"><defs><radialGradient id="clF" cx="0.5" cy="0.4" r="0.6"><stop offset="0" stop-color="#ffffff"/><stop offset="1" stop-color="#dfe6ee"/></radialGradient></defs><circle cx="19" cy="19" r="17" fill="#e8756c"/><circle cx="19" cy="19" r="16" fill="none" stroke="#f3a49c" stroke-width="1"/><circle cx="19" cy="19" r="13.8" fill="url(#clF)" stroke="#c9584f" stroke-width="0.8"/><circle cx="30.50" cy="19.00" r="0.6" fill="#888"/><circle cx="28.96" cy="24.75" r="0.6" fill="#888"/><circle cx="24.75" cy="28.96" r="0.6" fill="#888"/><circle cx="19.00" cy="30.50" r="0.6" fill="#888"/><circle cx="13.25" cy="28.96" r="0.6" fill="#888"/><circle cx="9.04" cy="24.75" r="0.6" fill="#888"/><circle cx="7.50" cy="19.00" r="0.6" fill="#888"/><circle cx="9.04" cy="13.25" r="0.6" fill="#888"/><circle cx="13.25" cy="9.04" r="0.6" fill="#888"/><circle cx="19.00" cy="7.50" r="0.6" fill="#888"/><circle cx="24.75" cy="9.04" r="0.6" fill="#888"/><circle cx="28.96" cy="13.25" r="0.6" fill="#888"/><path d="M19 19 L26 10.5" stroke="#5a6068" stroke-width="1.4"/><path d="M19 19 V30" stroke="#5a6068" stroke-width="1.4"/><path d="M19 19 H7" stroke="#d2453a" stroke-width="1.2"/><circle cx="19" cy="19" r="1.3" fill="#fff" stroke="#555" stroke-width="0.8"/></svg>
<svg class="i" style="left:807px;top:179px" width="16" height="16" viewBox="0 0 16 16"><circle cx="8" cy="8" r="7" fill="none" stroke="#c8c8c8" stroke-width="1.3"/><path d="M5 5 L10.5 10.5 M10.5 6.5 V10.5 H6.5" fill="none" stroke="#c8c8c8" stroke-width="1.3"/></svg>
<div class="t" style="left:1112px;top:173.57px;font-size:26.5px;color:#222;font-weight:normal;letter-spacing:-0.6px">Kunden</div>
<svg class="i" style="left:1492px;top:179px" width="16" height="16" viewBox="0 0 16 16"><circle cx="8" cy="8" r="7" fill="none" stroke="#c8c8c8" stroke-width="1.3"/><path d="M5 5 L10.5 10.5 M10.5 6.5 V10.5 H6.5" fill="none" stroke="#c8c8c8" stroke-width="1.3"/></svg>
<div class="a" style="left:1517px;top:163px;width:26px;height:98px;box-sizing:border-box;border:1px solid #c9c9c9;background:#f6f6f6;"></div>
<svg class="i" style="left:1522px;top:167px" width="20" height="20" viewBox="0 0 20 20"><rect x="0.5" y="1.5" width="11" height="13" fill="#eaf0fb" stroke="#8aa0cf" stroke-width="1"/><path d="M2 5 H10 M2 8 H10 M2 11 H10" stroke="#8aa0cf" stroke-width="0.8"/><rect x="7" y="4" width="13" height="15" rx="1.5" fill="#3f7fd0" stroke="#2d5ea8" stroke-width="1"/><text x="13.5" y="16" font-family="Liberation Sans" font-weight="bold" font-size="11" fill="#fff" text-anchor="middle">?</text></svg>
<div class="t" style="left:1539.5px;top:196px;font-size:13.3px;color:#3f3f3f;transform-origin:0 0;transform:rotate(90deg)">Handbuch</div>
<div class="a" style="left:375px;top:216px;width:1140px;height:1px;background:#c6c6c6;"></div>
<div class="a" style="left:375px;top:216px;width:1080px;height:2px;background:#bdbdbd;"></div>
<div class="a" style="left:375px;top:216px;width:2px;height:317px;background:#bdbdbd;"></div>
<div class="a" style="left:375px;top:532px;width:1140px;height:1px;background:#c6c6c6;"></div>
<div class="a" style="left:375px;top:531px;width:1080px;height:2px;background:#c0c0c0;"></div>
<div class="a" style="left:1514px;top:216px;width:1px;height:317px;background:#d4d4d4;"></div>
<div class="a" style="left:376px;top:217px;width:1078px;height:43px;background:#f4f4f4;"></div>
<div class="a" style="left:376px;top:217px;width:1078px;height:1px;background:#b9b9b9;"></div>
<div class="a" style="left:376px;top:260px;width:1078px;height:1px;background:#c4c4c4;"></div>
<div class="a" style="left:389px;top:217px;width:2px;height:43px;background:#cdcdcd;"></div>
<div class="a" style="left:486px;top:217px;width:2px;height:43px;background:#cdcdcd;"></div>
<div class="a" style="left:587px;top:217px;width:2px;height:43px;background:#cdcdcd;"></div>
<div class="a" style="left:712px;top:217px;width:2px;height:43px;background:#cdcdcd;"></div>
<div class="a" style="left:836px;top:217px;width:2px;height:43px;background:#cdcdcd;"></div>
<div class="a" style="left:924px;top:217px;width:2px;height:43px;background:#cdcdcd;"></div>
<div class="a" style="left:1049px;top:217px;width:2px;height:43px;background:#cdcdcd;"></div>
<div class="a" style="left:1174px;top:217px;width:2px;height:43px;background:#cdcdcd;"></div>
<div class="a" style="left:1300px;top:217px;width:2px;height:43px;background:#cdcdcd;"></div>
<div class="a" style="left:1453px;top:217px;width:2px;height:43px;background:#cdcdcd;"></div>
<div class="a" style="left:1454px;top:217px;width:1px;height:315px;background:#c8c8c8;"></div>
<div class="t" style="left:393px;top:225.76px;font-size:12.8px;color:#333;font-weight:normal;">ICH WÜRDE</div>
<div class="t" style="left:490.5px;top:225.76px;font-size:12.8px;color:#333;font-weight:normal;">Kategorie</div>
<div class="t" style="left:590px;top:225.76px;font-size:12.8px;color:#333;font-weight:normal;">Preisliste</div>
<div class="t" style="left:715px;top:225.76px;font-size:12.8px;color:#333;font-weight:normal;">Bonusart</div>
<div class="t" style="left:840px;top:225.76px;font-size:12.8px;color:#333;font-weight:normal;">Karten-Nr.</div>
<div class="t" style="left:927.5px;top:225.76px;font-size:12.8px;color:#333;font-weight:normal;">Name</div>
<div class="t" style="left:1052.5px;top:225.76px;font-size:12.8px;color:#333;font-weight:normal;">Bewertung</div>
<div class="t" style="left:1178px;top:225.76px;font-size:12.8px;color:#333;font-weight:normal;">Handy,</div>
<div class="t" style="left:1303px;top:225.76px;font-size:12.8px;color:#333;font-weight:normal;">Gefüllt</div>
<div class="t" style="left:1178px;top:241.16px;font-size:12.8px;color:#333;font-weight:normal;">Mobiltelefon</div>
<svg class="i" style="left:1029px;top:237px" width="11" height="6" viewBox="0 0 11 6"><path d="M0 6 L5.5 0 L11 6 Z" fill="#555"/></svg>
<div class="a" style="left:391px;top:261px;width:910px;height:43px;background:#d8effd;"></div>
<div class="a" style="left:376px;top:261px;width:14px;height:43px;background:#f4f4f4;"></div>
<div class="a" style="left:1301px;top:261px;width:153px;height:43px;background:#bcbcbc;"></div>
<div class="a" style="left:1303px;top:262px;width:150px;height:40px;background:#fff;"></div>
<div class="a" style="left:391px;top:304px;width:910px;height:44px;background:#dcfbe1;"></div>
<div class="a" style="left:376px;top:304px;width:14px;height:44px;background:#f4f4f4;"></div>
<div class="a" style="left:1301px;top:304px;width:153px;height:44px;background:#bcbcbc;"></div>
<div class="a" style="left:1303px;top:305px;width:150px;height:41px;background:#fff;"></div>
<div class="a" style="left:391px;top:348px;width:910px;height:44px;background:#d8effd;"></div>
<div class="a" style="left:376px;top:348px;width:14px;height:44px;background:#f4f4f4;"></div>
<div class="a" style="left:1301px;top:348px;width:153px;height:44px;background:#bcbcbc;"></div>
<div class="a" style="left:1303px;top:349px;width:150px;height:41px;background:#fff;"></div>
<div class="a" style="left:391px;top:392px;width:910px;height:43px;background:#dcfbe1;"></div>
<div class="a" style="left:376px;top:392px;width:14px;height:43px;background:#f4f4f4;"></div>
<div class="a" style="left:1301px;top:392px;width:153px;height:43px;background:#bcbcbc;"></div>
<div class="a" style="left:1303px;top:393px;width:150px;height:40px;background:#fff;"></div>
<div class="a" style="left:391px;top:435px;width:910px;height:43px;background:#d8effd;"></div>
<div class="a" style="left:376px;top:435px;width:14px;height:43px;background:#f4f4f4;"></div>
<div class="a" style="left:1301px;top:435px;width:153px;height:43px;background:#bcbcbc;"></div>
<div class="a" style="left:1303px;top:436px;width:150px;height:40px;background:#fff;"></div>
<div class="a" style="left:391px;top:478px;width:910px;height:8px;background:#dcfbe1;"></div>
<div class="a" style="left:376px;top:478px;width:14px;height:8px;background:#f4f4f4;"></div>
<div class="a" style="left:1301px;top:478px;width:153px;height:8px;background:#bcbcbc;"></div>
<div class="a" style="left:1303px;top:479px;width:150px;height:5px;background:#fff;"></div>
<div class="a" style="left:376px;top:304px;width:925px;height:1px;background:#c2c2c2;"></div>
<div class="a" style="left:376px;top:348px;width:925px;height:1px;background:#c2c2c2;"></div>
<div class="a" style="left:376px;top:391px;width:925px;height:1px;background:#c2c2c2;"></div>
<div class="a" style="left:376px;top:435px;width:925px;height:1px;background:#c2c2c2;"></div>
<div class="a" style="left:376px;top:478px;width:925px;height:1px;background:#c2c2c2;"></div>
<div class="a" style="left:390px;top:261px;width:1px;height:225px;background:#c8c8c8;"></div>
<div class="t" style="right:1085.5px;top:276.32px;font-size:13.8px;color:#333;text-align:right">40178</div>
<svg class="i" style="left:490px;top:274px" width="19" height="17" viewBox="0 0 19 17"><path d="M9.5 16.5 L2 8.5 Q-0.5 5.5 1 3 Q2.8 0 6 0.5 Q8.3 1 9.5 3.3 Q10.7 1 13 0.5 Q16.2 0 18 3 Q19.5 5.5 17 8.5 Z" fill="#d13a2c"/></svg>
<div class="t" style="left:511px;top:276.32px;font-size:13.8px;color:#333;font-weight:normal;">VIP</div>
<div class="t" style="left:590px;top:276.32px;font-size:13.8px;color:#333;font-weight:normal;">Ohne Rabatt</div>
<svg class="i" style="left:714px;top:271px" width="21" height="20" viewBox="0 0 21 20"><path d="M2 7 H19 V9 H18 L17 18 Q10.5 20 4 18 L3 9 H2 Z" fill="#1f7fe6"/><rect x="5" y="7" width="2.5" height="11" fill="#e82a22"/><rect x="13.5" y="7" width="2.5" height="11" fill="#e82a22"/><path d="M10.5 6 Q6 0 3.5 2 Q2 4 6 6.5 Z M10.5 6 Q15 0 17.5 2 Q19 4 15 6.5 Z" fill="#ee3a2a" stroke="#8a1a14" stroke-width="0.8"/><ellipse cx="10.5" cy="6.5" rx="3" ry="2" fill="#e8322a"/></svg>
<div class="t" style="left:736.5px;top:276.32px;font-size:13.8px;color:#333;font-weight:normal;">Bonus 10%</div>
<div class="t" style="left:841.5px;top:276.32px;font-size:13.8px;color:#333;font-weight:normal;">22222</div>
<div class="t" style="left:927.5px;top:276.32px;font-size:13.8px;color:#333;font-weight:normal;">Kunde Nr. 1</div>
<svg class="i" style="left:1061px;top:272px" width="110" height="20" viewBox="0 0 110 20"><polygon points="10.00,0.00 12.88,6.04 19.51,6.91 14.66,11.51 15.88,18.09 10.00,14.90 4.12,18.09 5.34,11.51 0.49,6.91 7.12,6.04" fill="#37b6f4"/><polygon points="31.30,0.00 34.18,6.04 40.81,6.91 35.96,11.51 37.18,18.09 31.30,14.90 25.42,18.09 26.64,11.51 21.79,6.91 28.42,6.04" fill="#37b6f4"/><polygon points="52.60,0.00 55.48,6.04 62.11,6.91 57.26,11.51 58.48,18.09 52.60,14.90 46.72,18.09 47.94,11.51 43.09,6.91 49.72,6.04" fill="#37b6f4"/><polygon points="73.90,0.00 76.78,6.04 83.41,6.91 78.56,11.51 79.78,18.09 73.90,14.90 68.02,18.09 69.24,11.51 64.39,6.91 71.02,6.04" fill="#37b6f4"/><polygon points="95.20,0.00 98.08,6.04 104.71,6.91 99.86,11.51 101.08,18.09 95.20,14.90 89.32,18.09 90.54,11.51 85.69,6.91 92.32,6.04" fill="#37b6f4"/></svg>
<div class="t" style="left:1179px;top:276.32px;font-size:13.8px;color:#333;font-weight:normal;">+380961112244</div>
<div class="a" style="left:1303px;top:264px;width:148px;height:36px;background:#00a8ff;"></div>
<div class="t" style="left:1277px;width:200px;top:276.32px;font-size:13.8px;color:#fff;text-align:center">100 %</div>
<div class="t" style="right:1085.5px;top:319.82px;font-size:13.8px;color:#333;text-align:right">40180</div>
<div class="t" style="left:490.5px;top:319.82px;font-size:13.8px;color:#333;font-weight:normal;">Klient</div>
<div class="t" style="left:590px;top:319.82px;font-size:13.8px;color:#333;font-weight:normal;">Ohne Rabatt</div>
<svg class="i" style="left:714px;top:315px" width="21" height="20" viewBox="0 0 21 20"><path d="M2 7 H19 V9 H18 L17 18 Q10.5 20 4 18 L3 9 H2 Z" fill="#1f7fe6"/><rect x="5" y="7" width="2.5" height="11" fill="#e82a22"/><rect x="13.5" y="7" width="2.5" height="11" fill="#e82a22"/><path d="M10.5 6 Q6 0 3.5 2 Q2 4 6 6.5 Z M10.5 6 Q15 0 17.5 2 Q19 4 15 6.5 Z" fill="#ee3a2a" stroke="#8a1a14" stroke-width="0.8"/><ellipse cx="10.5" cy="6.5" rx="3" ry="2" fill="#e8322a"/></svg>
<div class="t" style="left:736.5px;top:319.82px;font-size:13.8px;color:#333;font-weight:normal;">Bonus 10%</div>
<div class="t" style="left:927.5px;top:319.82px;font-size:13.8px;color:#333;font-weight:normal;">Kunde Nr. 2</div>
<svg class="i" style="left:1061px;top:316px" width="110" height="20" viewBox="0 0 110 20"><polygon points="10.00,0.00 12.88,6.04 19.51,6.91 14.66,11.51 15.88,18.09 10.00,14.90 4.12,18.09 5.34,11.51 0.49,6.91 7.12,6.04" fill="#37b6f4"/><polygon points="31.30,0.00 34.18,6.04 40.81,6.91 35.96,11.51 37.18,18.09 31.30,14.90 25.42,18.09 26.64,11.51 21.79,6.91 28.42,6.04" fill="#37b6f4"/><polygon points="52.60,0.00 55.48,6.04 62.11,6.91 57.26,11.51 58.48,18.09 52.60,14.90 46.72,18.09 47.94,11.51 43.09,6.91 49.72,6.04" fill="#a9b9ad"/><polygon points="73.90,0.00 76.78,6.04 83.41,6.91 78.56,11.51 79.78,18.09 73.90,14.90 68.02,18.09 69.24,11.51 64.39,6.91 71.02,6.04" fill="#a9b9ad"/><polygon points="95.20,0.00 98.08,6.04 104.71,6.91 99.86,11.51 101.08,18.09 95.20,14.90 89.32,18.09 90.54,11.51 85.69,6.91 92.32,6.04" fill="#a9b9ad"/></svg>
<div class="t" style="left:1179px;top:319.82px;font-size:13.8px;color:#333;font-weight:normal;">+79990000000</div>
<div class="a" style="left:1303px;top:307px;width:86px;height:37px;background:#00a8ff;"></div>
<div class="t" style="left:1277px;width:200px;top:319.82px;font-size:13.8px;color:#fff;text-align:center">60 %</div>
<div class="t" style="right:1085.5px;top:363.82px;font-size:13.8px;color:#333;text-align:right">40187</div>
<div class="t" style="left:490.5px;top:363.82px;font-size:13.8px;color:#333;font-weight:normal;">Klient</div>
<div class="t" style="left:590px;top:363.82px;font-size:13.8px;color:#333;font-weight:normal;">Ohne Rabatt</div>
<div class="t" style="left:715px;top:363.82px;font-size:13.8px;color:#333;font-weight:normal;">Keine Boni</div>
<div class="t" style="left:841.5px;top:363.82px;font-size:13.8px;color:#333;font-weight:normal;">55555</div>
<div class="t" style="left:927.5px;top:363.82px;font-size:13.8px;color:#333;font-weight:normal;">Kunde Nr. 3</div>
<svg class="i" style="left:1061px;top:360px" width="110" height="20" viewBox="0 0 110 20"><polygon points="10.00,0.00 12.88,6.04 19.51,6.91 14.66,11.51 15.88,18.09 10.00,14.90 4.12,18.09 5.34,11.51 0.49,6.91 7.12,6.04" fill="#37b6f4"/><polygon points="31.30,0.00 34.18,6.04 40.81,6.91 35.96,11.51 37.18,18.09 31.30,14.90 25.42,18.09 26.64,11.51 21.79,6.91 28.42,6.04" fill="#37b6f4"/><polygon points="52.60,0.00 55.48,6.04 62.11,6.91 57.26,11.51 58.48,18.09 52.60,14.90 46.72,18.09 47.94,11.51 43.09,6.91 49.72,6.04" fill="#a9b5b9"/><polygon points="73.90,0.00 76.78,6.04 83.41,6.91 78.56,11.51 79.78,18.09 73.90,14.90 68.02,18.09 69.24,11.51 64.39,6.91 71.02,6.04" fill="#a9b5b9"/><polygon points="95.20,0.00 98.08,6.04 104.71,6.91 99.86,11.51 101.08,18.09 95.20,14.90 89.32,18.09 90.54,11.51 85.69,6.91 92.32,6.04" fill="#a9b5b9"/></svg>
<div class="t" style="left:1179px;top:363.82px;font-size:13.8px;color:#333;font-weight:normal;">+79345454545</div>
<div class="a" style="left:1303px;top:351px;width:86px;height:37px;background:#00a8ff;"></div>
<div class="t" style="left:1277px;width:200px;top:363.82px;font-size:13.8px;color:#fff;text-align:center">60 %</div>
<div class="t" style="right:1085.5px;top:407.32px;font-size:13.8px;color:#333;text-align:right">40181</div>
<div class="t" style="left:490.5px;top:407.32px;font-size:13.8px;color:#333;font-weight:normal;">Klient</div>
<div class="t" style="left:590px;top:407.32px;font-size:13.8px;color:#333;font-weight:normal;">Ohne Rabatt</div>
<div class="t" style="left:715px;top:407.32px;font-size:13.8px;color:#333;font-weight:normal;">Keine Boni</div>
<div class="t" style="left:841.5px;top:407.32px;font-size:13.8px;color:#333;font-weight:normal;">77777</div>
<div class="t" style="left:927.5px;top:407.32px;font-size:13.8px;color:#333;font-weight:normal;">Kunde Nr. 4</div>
<svg class="i" style="left:1061px;top:403px" width="110" height="20" viewBox="0 0 110 20"><polygon points="10.00,0.00 12.88,6.04 19.51,6.91 14.66,11.51 15.88,18.09 10.00,14.90 4.12,18.09 5.34,11.51 0.49,6.91 7.12,6.04" fill="#37b6f4"/><polygon points="31.30,0.00 34.18,6.04 40.81,6.91 35.96,11.51 37.18,18.09 31.30,14.90 25.42,18.09 26.64,11.51 21.79,6.91 28.42,6.04" fill="#37b6f4"/><polygon points="52.60,0.00 55.48,6.04 62.11,6.91 57.26,11.51 58.48,18.09 52.60,14.90 46.72,18.09 47.94,11.51 43.09,6.91 49.72,6.04" fill="#37b6f4"/><polygon points="73.90,0.00 76.78,6.04 83.41,6.91 78.56,11.51 79.78,18.09 73.90,14.90 68.02,18.09 69.24,11.51 64.39,6.91 71.02,6.04" fill="#a9b9ad"/><polygon points="95.20,0.00 98.08,6.04 104.71,6.91 99.86,11.51 101.08,18.09 95.20,14.90 89.32,18.09 90.54,11.51 85.69,6.91 92.32,6.04" fill="#a9b9ad"/></svg>
<div class="t" style="left:1179px;top:400.32px;font-size:13.8px;color:#333;font-weight:normal;">+79990000000,</div>
<div class="t" style="left:1179px;top:416.32px;font-size:13.8px;color:#333;font-weight:normal;">+79991111111</div>
<div class="a" style="left:1303px;top:395px;width:86px;height:36px;background:#00a8ff;"></div>
<div class="t" style="left:1277px;width:200px;top:407.32px;font-size:13.8px;color:#fff;text-align:center">60 %</div>
<div class="t" style="right:1085.5px;top:450.32px;font-size:13.8px;color:#333;text-align:right">40184</div>
<svg class="i" style="left:490px;top:448px" width="19" height="17" viewBox="0 0 19 17"><path d="M9.5 16.5 L2 8.5 Q-0.5 5.5 1 3 Q2.8 0 6 0.5 Q8.3 1 9.5 3.3 Q10.7 1 13 0.5 Q16.2 0 18 3 Q19.5 5.5 17 8.5 Z" fill="#d13a2c"/></svg>
<div class="t" style="left:511px;top:450.32px;font-size:13.8px;color:#333;font-weight:normal;">VIP</div>
<div class="t" style="left:590px;top:450.32px;font-size:13.8px;color:#333;font-weight:normal;">In Yuan</div>
<div class="t" style="left:715px;top:450.32px;font-size:13.8px;color:#333;font-weight:normal;">Keine Boni</div>
<div class="t" style="left:841.5px;top:450.32px;font-size:13.8px;color:#333;font-weight:normal;">88888</div>
<div class="t" style="left:927.5px;top:450.32px;font-size:13.8px;color:#333;font-weight:normal;">Kunde Nr. 5</div>
<svg class="i" style="left:1061px;top:446px" width="110" height="20" viewBox="0 0 110 20"><polygon points="10.00,0.00 12.88,6.04 19.51,6.91 14.66,11.51 15.88,18.09 10.00,14.90 4.12,18.09 5.34,11.51 0.49,6.91 7.12,6.04" fill="#37b6f4"/><polygon points="31.30,0.00 34.18,6.04 40.81,6.91 35.96,11.51 37.18,18.09 31.30,14.90 25.42,18.09 26.64,11.51 21.79,6.91 28.42,6.04" fill="#37b6f4"/><polygon points="52.60,0.00 55.48,6.04 62.11,6.91 57.26,11.51 58.48,18.09 52.60,14.90 46.72,18.09 47.94,11.51 43.09,6.91 49.72,6.04" fill="#37b6f4"/><polygon points="73.90,0.00 76.78,6.04 83.41,6.91 78.56,11.51 79.78,18.09 73.90,14.90 68.02,18.09 69.24,11.51 64.39,6.91 71.02,6.04" fill="#37b6f4"/><polygon points="95.20,0.00 98.08,6.04 104.71,6.91 99.86,11.51 101.08,18.09 95.20,14.90 89.32,18.09 90.54,11.51 85.69,6.91 92.32,6.04" fill="#37b6f4"/></svg>
<div class="t" style="left:1179px;top:450.32px;font-size:13.8px;color:#333;font-weight:normal;">+77777777777</div>
<div class="a" style="left:1303px;top:438px;width:117px;height:36px;background:#00a8ff;"></div>
<div class="t" style="left:1277px;width:200px;top:450.32px;font-size:13.8px;color:#fff;text-align:center">80 %</div>
<div class="a" style="left:1303px;top:482px;width:57px;height:4px;background:#00a8ff;"></div>
<div class="a" style="left:391px;top:435px;width:1063px;height:43px;box-sizing:border-box;border:1px dotted #444;"></div>
<svg class="i" style="left:380px;top:453px" width="6" height="10" viewBox="0 0 6 10"><path d="M0 0 L6 5 L0 10 Z" fill="#555"/></svg>
<div class="a" style="left:376px;top:486px;width:1078px;height:46px;background:#f4f4f4;"></div>
<div class="a" style="left:376px;top:486px;width:1078px;height:1px;background:#c6c6c6;"></div>
<div class="a" style="left:394px;top:490px;width:92px;height:38px;box-sizing:border-box;border:1px solid #c8c8c8;background:#fff;"></div>
<div class="t" style="right:1092px;top:503.57px;font-size:13.5px;color:#333;text-align:right">14</div>
<div class="a" style="left:1492px;top:217px;width:1px;height:315px;background:#d6d6d6;"></div>
<svg class="i" style="left:1499px;top:225px" width="9" height="5" viewBox="0 0 9 5"><path d="M0 5 L4.5 0 L9 5 Z" fill="#8a8a8a"/></svg>
<div class="a" style="left:1499px;top:239px;width:9px;height:93px;background:#bdbdbd;"></div>
<svg class="i" style="left:1499px;top:519px" width="9" height="5" viewBox="0 0 9 5"><path d="M0 0 L4.5 5 L9 0 Z" fill="#8a8a8a"/></svg>
<div class="a" style="left:369px;top:522px;width:1px;height:16px;background:repeating-linear-gradient(to bottom,#777 0 1px,transparent 1px 2px)"></div>
<div class="a" style="left:934px;top:538px;width:20px;height:1px;background:repeating-linear-gradient(to right,#777 0 1px,transparent 1px 2px)"></div>
<div class="a" style="left:487px;top:547px;width:284px;height:52px;box-sizing:border-box;border:1px solid #c2c2c2;background:#f3f3f3;"></div>
<svg class="i" style="left:502px;top:556px" width="31" height="34" viewBox="0 0 31 34"><rect x="0.5" y="0.5" width="30" height="33" rx="2" fill="url(#gBook)" stroke="#5b82b4"/><rect x="0.5" y="0.5" width="6" height="33" rx="1.5" fill="url(#gSpine)"/><rect x="6.5" y="1.5" width="22.5" height="2" fill="#f4f9ff"/><line x1="7" y1="4" x2="29.5" y2="4" stroke="#8fb4dc" stroke-width="0.8"/></svg>
<div class="t" style="left:546px;top:563.54px;font-size:19.8px;color:#585858;font-weight:normal;">Arbeiten Sie mit Kunden</div>
<div class="a" style="left:772px;top:547px;width:155px;height:52px;box-sizing:border-box;border:1px solid #c2c2c2;background:#f3f3f3;"></div>
<svg class="i" style="left:787px;top:556px" width="31" height="34" viewBox="0 0 31 34"><rect x="0.5" y="0.5" width="30" height="33" rx="2" fill="url(#gBook)" stroke="#5b82b4"/><rect x="0.5" y="0.5" width="6" height="33" rx="1.5" fill="url(#gSpine)"/><rect x="6.5" y="1.5" width="22.5" height="2" fill="#f4f9ff"/><line x1="7" y1="4" x2="29.5" y2="4" stroke="#8fb4dc" stroke-width="0.8"/></svg>
<div class="t" style="left:830px;top:564.30px;font-size:18.9px;color:#585858;font-weight:normal;">Menschen</div>
<div class="a" style="left:928px;top:547px;width:192px;height:52px;box-sizing:border-box;border:1px solid #c2c2c2;background:#f3f3f3;"></div>
<svg class="i" style="left:943px;top:556px" width="31" height="34" viewBox="0 0 31 34"><rect x="0.5" y="0.5" width="30" height="33" rx="2" fill="url(#gBook)" stroke="#5b82b4"/><rect x="0.5" y="0.5" width="6" height="33" rx="1.5" fill="url(#gSpine)"/><rect x="6.5" y="1.5" width="22.5" height="2" fill="#f4f9ff"/><line x1="7" y1="4" x2="29.5" y2="4" stroke="#8fb4dc" stroke-width="0.8"/></svg>
<div class="t" style="left:986.5px;top:563.37px;font-size:20px;color:#585858;font-weight:normal;">Telefonanrufe</div>
<div class="a" style="left:376px;top:544px;width:111px;height:55px;box-sizing:border-box;border:1px solid #c6c6c6;background:#fff;border-bottom:none"></div>
<div class="a" style="left:376px;top:544px;width:111px;height:3px;background:#0f9af0;"></div>
<svg class="i" style="left:393px;top:554px" width="31" height="34" viewBox="0 0 31 34"><rect x="0.5" y="0.5" width="30" height="33" rx="2" fill="url(#gBook)" stroke="#5b82b4"/><rect x="0.5" y="0.5" width="6" height="33" rx="1.5" fill="url(#gSpine)"/><rect x="6.5" y="1.5" width="22.5" height="2" fill="#f4f9ff"/><line x1="7" y1="4" x2="29.5" y2="4" stroke="#8fb4dc" stroke-width="0.8"/></svg>
<div class="t" style="left:436.5px;top:563.37px;font-size:20px;color:#1d96e3;font-weight:normal;">Foto</div>
<div class="a" style="left:487px;top:598px;width:1028px;height:1px;background:#c8c8c8;"></div>
<div class="a" style="left:375px;top:600px;width:1140px;height:1px;background:#d0d0d0;"></div>
<div class="a" style="left:375px;top:598px;width:1px;height:306px;background:#c6c6c6;"></div>
<div class="a" style="left:1514px;top:600px;width:1px;height:304px;background:#c6c6c6;"></div>
<div class="a" style="left:1511px;top:601px;width:1px;height:302px;background:#d8d8d8;"></div>
<div class="a" style="left:375px;top:903px;width:1140px;height:1px;background:#c6c6c6;"></div>
<div class="a" style="left:378px;top:601px;width:377px;height:303px;box-sizing:border-box;border:1px solid #c2c2c2;background:#fff;border-width:2px 1px 1px 2px"></div>
<div class="a" style="left:380px;top:603px;width:374px;height:41px;background:#f4f4f4;"></div>
<div class="a" style="left:380px;top:644px;width:374px;height:1px;background:#c4c4c4;"></div>
<div class="a" style="left:392px;top:603px;width:1px;height:261px;background:#c8c8c8;"></div>
<div class="a" style="left:380px;top:645px;width:12px;height:219px;background:#f4f4f4;"></div>
<div class="a" style="left:393px;top:645px;width:361px;height:219px;background:#d8effd;"></div>
<svg class="i" style="left:393px;top:645px" width="361" height="219" viewBox="0 0 361 219">
<defs>
<linearGradient id="hair" x1="0" y1="0" x2="0" y2="1"><stop offset="0" stop-color="#77553b"/><stop offset="0.45" stop-color="#88634a"/><stop offset="1" stop-color="#94704f"/></linearGradient>
<radialGradient id="skin" cx="0.45" cy="0.35" r="0.7"><stop offset="0" stop-color="#f8e0cc"/><stop offset="0.65" stop-color="#edc8ab"/><stop offset="1" stop-color="#d29d7b"/></radialGradient>
<linearGradient id="neck" x1="0" y1="0" x2="0" y2="1"><stop offset="0" stop-color="#b98466"/><stop offset="0.5" stop-color="#dcae8e"/><stop offset="1" stop-color="#ecc8ac"/></linearGradient>
</defs>
<path d="M86 219 Q90 208 104 204 L112 219 Z" fill="#c4a12a"/>
<path d="M312 219 Q305 205 284 199 L266 200 V219 Z" fill="#c4a12a"/>
<path d="M262 219 Q262 200 284 198 L286 219 Z" fill="#e8c3a5"/>
<path d="M195 4 C162 4 144 26 138 48 C128 88 122 130 115 170 C111 195 105 210 102 219 L268 219 C272 196 276 170 274 140 C272 105 266 75 258 58 C248 30 232 5 195 4 Z" fill="url(#hair)"/>
<path d="M177 150 C177 180 171 205 164 219 L238 219 C233 205 230 180 230 152 Z" fill="url(#neck)"/>
<path d="M160 52 C164 36 180 28 200 28 C222 28 236 38 240 54 C245 75 247 95 246 108 C245 132 234 150 218 160 C210 165 204 168 199 168 C191 167 181 160 172 150 C160 135 155 115 155 96 C155 80 157 65 160 52 Z" fill="url(#skin)"/>
<path d="M150 50 C140 90 138 150 148 219 L166 219 C164 180 160 140 158 100 C157 80 158 62 165 45 Z" fill="#7f5a3e"/>
<path d="M243 52 C252 80 256 120 250 160 C246 185 241 205 238 219 L268 219 C272 190 274 160 270 120 C266 90 260 65 243 52 Z" fill="#835d40"/>
<path d="M140 80 C132 130 126 180 118 219" fill="none" stroke="#a47b57" stroke-width="3" opacity="0.7"/>
<path d="M258 75 C266 115 268 160 262 219" fill="none" stroke="#a47b57" stroke-width="3" opacity="0.6"/>
<path d="M200 6 C175 8 158 25 150 48" fill="none" stroke="#9a7352" stroke-width="3" opacity="0.6"/>
<path d="M166 80 Q175 75 186 79" fill="none" stroke="#6f4d37" stroke-width="2.4"/>
<path d="M211 78 Q222 74 233 79" fill="none" stroke="#6f4d37" stroke-width="2.4"/>
<ellipse cx="176" cy="88" rx="8" ry="3" fill="#523828"/>
<ellipse cx="221" cy="87" rx="8" ry="3" fill="#523828"/>
<path d="M198 92 C197 102 193 110 190 114 Q199 119 208 114" fill="none" stroke="#c58e6e" stroke-width="2"/>
<path d="M177 127 Q200 122 223 125 Q216 148 200 148 Q184 147 177 127 Z" fill="#c07a6e"/>
<path d="M179 128 Q200 124 221 126 Q214 138 200 139 Q186 138 179 128 Z" fill="#fbf5f0"/>
</svg>
<div class="a" style="left:380px;top:864px;width:374px;height:1px;background:#c4c4c4;"></div>
<div class="a" style="left:380px;top:865px;width:374px;height:38px;background:#f4f4f4;"></div>
<div class="t" style="left:395px;top:608.74px;font-size:13.3px;color:#333;font-weight:normal;">Foto</div>
<svg class="i" style="left:383px;top:841px" width="6" height="10" viewBox="0 0 6 10"><path d="M0 0 L6 5 L0 10 Z" fill="#555"/></svg>
<div class="a" style="left:1490px;top:602px;width:1px;height:301px;background:#d2d2d2;"></div>
<svg class="i" style="left:1497px;top:609px" width="9" height="5" viewBox="0 0 9 5"><path d="M0 5 L4.5 0 L9 5 Z" fill="#8a8a8a"/></svg>
<div class="a" style="left:1496px;top:623px;width:10px;height:141px;background:#bdbdbd;"></div>
<svg class="i" style="left:1497px;top:890px" width="9" height="5" viewBox="0 0 9 5"><path d="M0 0 L4.5 5 L9 0 Z" fill="#8a8a8a"/></svg>
<div class="a" style="left:21px;top:906px;width:1529px;height:5px;box-sizing:border-box;border:1px solid #c8c8c8;background:#fff;"></div>
<div class="a" style="left:24px;top:908px;width:178px;height:52px;box-sizing:border-box;border:1px solid #c6c6c6;background:#f3f3f3;"></div>
<svg class="i" style="left:40px;top:921px" width="30" height="26" viewBox="0 0 30 26"><rect x="0.5" y="0.5" width="29" height="25" rx="2" fill="#eef2fa" stroke="#8ea4cf" stroke-width="1"/><rect x="1" y="1" width="28" height="5" fill="#9fc0ea"/><circle cx="25.5" cy="3.5" r="1.3" fill="#e0403a"/></svg>
<div class="t" style="left:82px;top:927.32px;font-size:13.8px;color:#555;font-weight:normal;">Schnellstart</div>
<div class="a" style="left:167px;top:924px;width:18px;height:18px;background:#fff;"></div>
<svg class="i" style="left:170px;top:929px" width="11" height="10" viewBox="0 0 11 10"><path d="M1 1 L10 9 M10 1 L1 9" stroke="#1e96e0" stroke-width="2.2"/></svg>
<div class="a" style="left:201px;top:907px;width:156px;height:55px;box-sizing:border-box;border:1px solid #c6c6c6;background:#fff;border-bottom:none"></div>
<div class="a" style="left:201px;top:960px;width:156px;height:2px;background:#1e9be8;"></div>
<svg class="i" style="left:218px;top:918px" width="31" height="34" viewBox="0 0 31 34"><rect x="0.5" y="0.5" width="30" height="33" rx="2" fill="url(#gBook)" stroke="#5b82b4"/><rect x="0.5" y="0.5" width="6" height="33" rx="1.5" fill="url(#gSpine)"/><rect x="6.5" y="1.5" width="22.5" height="2" fill="#f4f9ff"/><line x1="7" y1="4" x2="29.5" y2="4" stroke="#8fb4dc" stroke-width="0.8"/></svg>
<div class="t" style="left:260.5px;top:927.75px;font-size:14px;color:#1d96e3;font-weight:normal;">Kunden</div>
<svg class="i" style="left:325px;top:930px" width="11" height="10" viewBox="0 0 11 10"><path d="M1 1 L10 9 M10 1 L1 9" stroke="#1e96e0" stroke-width="2.2"/></svg>
<svg class="i" style="left:28px;top:965px" width="21" height="21" viewBox="0 0 21 21"><circle cx="10.5" cy="10.5" r="10" fill="#3f78bd"/><rect x="9" y="4.5" width="3" height="2.6" fill="#fff"/><rect x="9" y="8.5" width="3" height="8" fill="#fff"/></svg>
<div class="t" style="left:70px;top:969.89px;font-size:13.6px;color:#444;font-weight:normal;">7.3.9041.10 Professional</div>
<div class="a" style="left:247px;top:966px;width:1px;height:19px;background:#c8c8c8;"></div>
<svg class="i" style="left:261px;top:965px" width="16" height="20" viewBox="0 0 16 20"><rect x="1" y="2" width="14" height="16" rx="3" fill="#f0b84c" stroke="#d18a28" stroke-width="1"/><ellipse cx="8" cy="3" rx="7" ry="2.5" fill="#fbe0a0" stroke="#d18a28" stroke-width="1"/><path d="M1 8 Q8 11 15 8 M1 13 Q8 16 15 13" fill="none" stroke="#d18a28" stroke-width="1"/></svg>
<div class="t" style="left:299px;top:969.89px;font-size:13.6px;color:#444;font-weight:normal;">localhost (utf8)</div>
<div class="a" style="left:416px;top:966px;width:1px;height:19px;background:#c8c8c8;"></div>
<svg class="i" style="left:429px;top:966px" width="20" height="19" viewBox="0 0 20 19"><path d="M1 18.5 Q1.5 12 10 12 Q18.5 12 19 18.5 Z" fill="#74b84a"/><circle cx="10" cy="7" r="4.8" fill="#f1c9a0"/><path d="M5 6.5 Q5 1.5 10 1.5 Q15 1.5 15 6.5 Q13.5 3.8 10 3.8 Q6.5 3.8 5 6.5 Z" fill="#b8763c"/></svg>
<div class="t" style="left:469px;top:970.31px;font-size:13.1px;color:#444;font-weight:normal;">NIKOLAY (MAIN)</div>
<div class="a" style="left:596px;top:966px;width:1px;height:19px;background:#c8c8c8;"></div>
<svg class="i" style="left:608px;top:966px" width="19" height="18" viewBox="0 0 19 18"><rect x="0.5" y="0.5" width="18" height="17" fill="#fff" stroke="#5a72a8" stroke-width="1"/><rect x="0.5" y="0.5" width="18" height="3.5" fill="#e0473e"/><text x="9.5" y="15.5" font-family="Liberation Sans" font-weight="bold" font-size="10" fill="#2f4f8f" text-anchor="middle">31</text></svg>
<div class="t" style="left:648px;top:969.38px;font-size:14.2px;color:#444;font-weight:normal;">05.06.2024</div>
<div class="a" style="left:744px;top:966px;width:1px;height:19px;background:#c8c8c8;"></div>
<div class="t" style="left:779px;top:969.38px;font-size:14.2px;color:#444;font-weight:normal;">00:00:00:004</div>
<div class="a" style="left:893px;top:966px;width:1px;height:19px;background:#c8c8c8;"></div>
<div class="a" style="left:1519px;top:966px;width:1px;height:19px;background:#c8c8c8;"></div>
<svg class="i" style="left:1533.5px;top:971.5px" width="15" height="15" viewBox="0 0 15 15"><path d="M10.5 2 H13.5 M12 0.5 V3.5" stroke="#6a6a6a" stroke-width="1.2"/><path d="M5.5 7 H8.5 M7 5.5 V8.5" stroke="#6a6a6a" stroke-width="1.2"/><path d="M10.5 7 H13.5 M12 5.5 V8.5" stroke="#6a6a6a" stroke-width="1.2"/><path d="M0.5 12 H3.5 M2 10.5 V13.5" stroke="#6a6a6a" stroke-width="1.2"/><path d="M5.5 12 H8.5 M7 10.5 V13.5" stroke="#6a6a6a" stroke-width="1.2"/><path d="M10.5 12 H13.5 M12 10.5 V13.5" stroke="#6a6a6a" stroke-width="1.2"/></svg>
</body></html>
